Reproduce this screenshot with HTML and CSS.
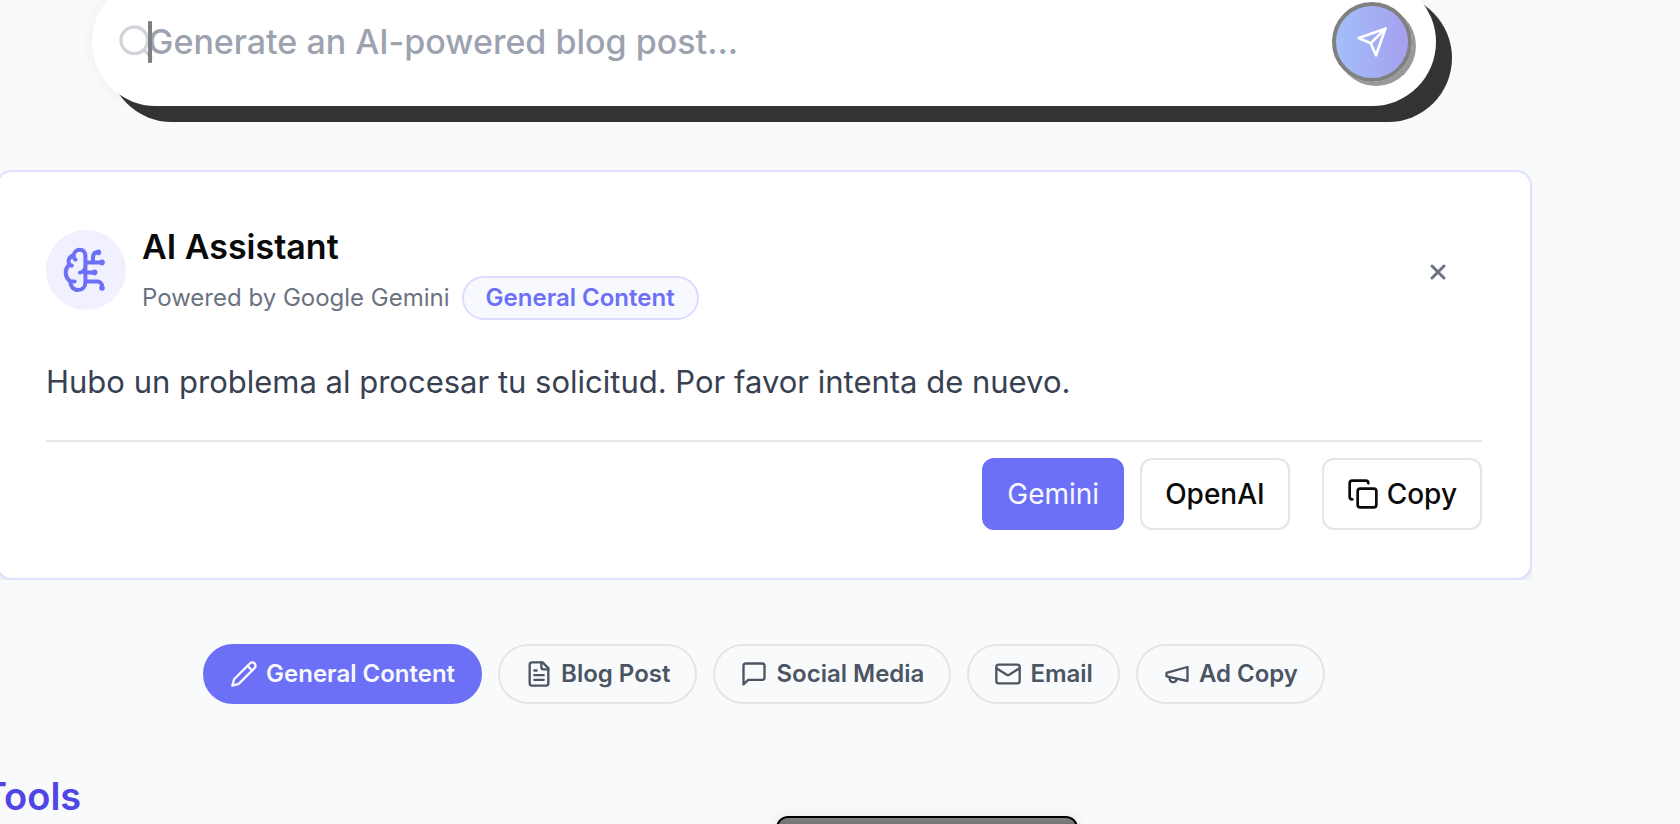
FILE: index.html
```html
<!DOCTYPE html>
<html lang="en">
<head>
<meta charset="utf-8">
<title>AI Tools</title>
<link rel="stylesheet" href="styles.css">
</head>
<body>
<main class="page">
  <form class="search">
    <svg class="search-icon" viewBox="0 0 24 24" aria-hidden="true"><circle cx="11" cy="11" r="8"/><path d="m21 21-4.300-4.300"/></svg>
    <span class="caret"></span>
    <input class="search-input" type="text" aria-label="Prompt" placeholder="Generate an AI-powered blog post...">
    <button class="send" type="button" aria-label="Send">
      <svg viewBox="0 0 24 24"><path d="M22 2 15 22 11 13 2 9Z"/><path d="M22 2 11 13"/></svg>
    </button>
  </form>

  <div class="card-wrap">
  <section class="card">
    <header class="card-head">
      <span class="avatar">
        <svg viewBox="0 0 24 24" aria-hidden="true"><path d="M11.700 5.200C11.700 3 10.500 1.900 8.900 1.900 7.200 1.900 6 3.100 5.800 4.600 3.600 5.200 2.700 7.300 3.700 9.300 1.200 11.300 1.200 15.600 4.100 17.600 4.100 20.200 5.800 22 8 22c2.200 0 3.700-1.500 3.700-3.900V5.200M5.800 4.600C5.800 5.800 6.100 6.400 6.700 6.800M3.700 9.300 4.900 9.800M4.100 17.600 6.300 17.800M11.700 10.500C11.500 12 10.700 13 9 13.300M11.700 8.200H20M11.700 13.200H16.200M11.700 17.800H17.800a2.200 2.200 0 0 1 2.200 2.200V21M15.500 8V5.800C15.500 4 16.500 3 18 3"/><g class="nodes"><circle cx="18.200" cy="3.200" r="1.400"/><circle cx="20" cy="8.200" r="1.400"/><circle cx="16.300" cy="13.200" r="1.400"/><circle cx="20" cy="21" r="1.400"/></g></svg>
      </span>
      <div class="heading">
        <h2 class="title">AI Assistant</h2>
        <div class="meta"><span>Powered by Google Gemini</span><span class="badge">General Content</span></div>
      </div>
      <button class="close" type="button" aria-label="Close"><svg viewBox="0 0 24 24"><path d="M18 6 6 18M6 6l12 12"/></svg></button>
    </header>
    <p class="message">Hubo un problema al procesar tu solicitud. Por favor intenta de nuevo.</p>
    <footer class="actions">
      <div class="models">
        <button class="btn btn-on" type="button">Gemini</button>
        <button class="btn" type="button">OpenAI</button>
      </div>
      <button class="btn" type="button"><svg viewBox="0 0 24 24" aria-hidden="true"><rect x="8" y="8" width="14" height="14" rx="2"/><path d="M4 16c-1.100 0-2-.9-2-2V4c0-1.100.9-2 2-2h10c1.100 0 2 .9 2 2"/></svg>Copy</button>
    </footer>
  </section>
  </div>

  <nav class="chips" aria-label="Content type">
    <button class="chip chip-on" type="button"><svg viewBox="0 0 24 24" aria-hidden="true"><path d="M17 3a2.830 2.830 0 1 1 4 4L7.500 20.500 2 22l1.500-5.500Z"/><path d="m15 5 4 4"/></svg>General Content</button>
    <button class="chip" type="button"><svg viewBox="0 0 24 24" aria-hidden="true"><path d="M15 2H6a2 2 0 0 0-2 2v16a2 2 0 0 0 2 2h12a2 2 0 0 0 2-2V7Z"/><path d="M14 2v4a2 2 0 0 0 2 2h4M10 9H8M16 13H8M16 17H8"/></svg>Blog Post</button>
    <button class="chip" type="button"><svg viewBox="0 0 24 24" aria-hidden="true"><path d="M21 15a2 2 0 0 1-2 2H7l-4 4V5a2 2 0 0 1 2-2h14a2 2 0 0 1 2 2z"/></svg>Social Media</button>
    <button class="chip" type="button"><svg viewBox="0 0 24 24" aria-hidden="true"><rect x="2" y="4" width="20" height="16" rx="2"/><path d="m22 7-8.970 5.700a1.940 1.940 0 0 1-2.060 0L2 7"/></svg>Email</button>
    <button class="chip" type="button"><svg viewBox="0 0 24 24" aria-hidden="true"><path d="m3 11 18-5v12L3 14v-3z"/><path d="M11.600 16.800a3 3 0 1 1-5.800-1.600"/></svg>Ad Copy</button>
  </nav>

  <h2 class="section-title">Tools</h2>
</main>
<div class="dock"></div>
</body>
</html>
```
FILE: styles.css
```css
* { box-sizing: border-box; }
body {
  margin: 0;
  min-height: 100vh;
  overflow: hidden;
  background: #f9fafc;
  color: #0a0a0a;
  font-family: Inter, "Liberation Sans", sans-serif;
}
button { margin: 0; font: inherit; cursor: pointer; }
svg {
  display: block;
  flex: none;
  fill: none;
  stroke: currentColor;
  stroke-width: 2;
  stroke-linecap: round;
  stroke-linejoin: round;
}
.page {
  display: flex;
  flex-direction: column;
  margin: -22px 148px 0 -4px;
}
.search {
  position: relative;
  display: flex;
  align-items: center;
  margin: 0 96px;
  height: 128px;
  padding: 0 24px;
  border-radius: 64px;
  background: #fff;
  box-shadow: 16px 16px 0 #333, 0 0 16px rgba(0, 0, 0, 0.05);
}
.search-icon { width: 40px; height: 40px; color: #d1d5db; }
.caret {
  position: absolute;
  left: 56px;
  width: 4px;
  height: 42px;
  border-radius: 1px;
  background: #808080;
}
.search-input {
  flex: 1;
  min-width: 0;
  margin-left: -8px;
  padding: 0;
  border: 0;
  outline: 0;
  background: transparent;
  font: 500 34px/44px Inter, "Liberation Sans", sans-serif;
}
.search-input::placeholder { color: #9ca3af; opacity: 1; }
.send {
  display: grid;
  place-items: center;
  width: 80px;
  height: 80px;
  padding: 0;
  border: 4px solid #808080;
  border-radius: 50%;
  background: linear-gradient(90deg, #a3bffa, #a5a0ee);
  box-shadow: 4px 4px 0 #999;
  color: #fff;
}
.send svg { width: 32px; height: 32px; }
.card-wrap { margin-top: 64px; overflow: hidden; }
.card {
  padding: 48px;
  border: 2px solid #e0e0ff;
  border-radius: 16px;
  background: #fff;
  box-shadow: 0 4px 8px rgba(0, 0, 0, 0.1);
}
.card-head { display: flex; align-items: center; gap: 16px; }
.avatar {
  display: grid;
  place-items: center;
  width: 80px;
  height: 80px;
  border-radius: 50%;
  background: #f0f0ff;
  color: #6b70f7;
}
.avatar svg { width: 48px; height: 48px; }
.nodes { fill: currentColor; stroke: none; }
.heading { flex: 1; }
.title { margin: 0; padding-bottom: 2px; font-size: 34px; font-weight: 600; line-height: 54px; }
.meta {
  display: flex;
  align-items: center;
  gap: 12px;
  color: #6b7280;
  font-size: 24px;
  line-height: 32px;
}
.badge {
  padding: 4px 22px;
  border: 2px solid #dcdcff;
  border-radius: 22px;
  background: #f8f8ff;
  color: #6b70f7;
  font-weight: 600;
}
.close {
  display: grid;
  place-items: center;
  width: 56px;
  height: 56px;
  margin: 4px 16px 0 0;
  padding: 0;
  border: 0;
  background: none;
  color: #6b7280;
}
.close svg { width: 24px; height: 24px; stroke-width: 3; }
.message {
  margin: 0;
  padding: 38px 0 34px;
  color: #374151;
  font-size: 31px;
  line-height: 48px;
}
.actions {
  display: flex;
  justify-content: flex-end;
  gap: 32px;
  padding-top: 16px;
  border-top: 2px solid #e5e7eb;
}
.models { display: flex; gap: 16px; }
.btn {
  display: flex;
  align-items: center;
  gap: 8px;
  height: 72px;
  padding: 0 23px;
  border: 2px solid #e5e5e5;
  border-radius: 12px;
  background: #fff;
  color: #0a0a0a;
  font-size: 28px;
  font-weight: 500;
}
.btn svg { width: 32px; height: 32px; }
.btn-on { border-color: #6b70f7; background: #6b70f7; color: #f8f8ff; font-weight: 400; }
.chips {
  display: flex;
  flex-wrap: wrap;
  justify-content: center;
  gap: 16px;
  margin-top: 64px;
}
.chip {
  display: flex;
  align-items: center;
  gap: 8px;
  height: 60px;
  padding: 0 25px 1px;
  border: 2px solid #e7e5e4;
  border-radius: 30px;
  background: transparent;
  color: #4b5563;
  font-size: 24px;
  font-weight: 600;
}
.chip svg { width: 28px; height: 28px; }
.chip-on { border-color: #6b70f7; background: #6b70f7; color: #f8f8ff; }
.section-title {
  margin: 68px 0 0 -14px;
  color: #4f46e5;
  font-size: 38px;
  font-weight: 600;
  line-height: 48px;
}
.dock {
  position: fixed;
  bottom: -48px;
  left: 776px;
  width: 302px;
  height: 56px;
  border: 2px solid #000;
  border-radius: 12px;
  background: linear-gradient(#808080, #666 12px);
  box-shadow: 0 0 16px rgba(0, 0, 0, 0.08);
}
```
